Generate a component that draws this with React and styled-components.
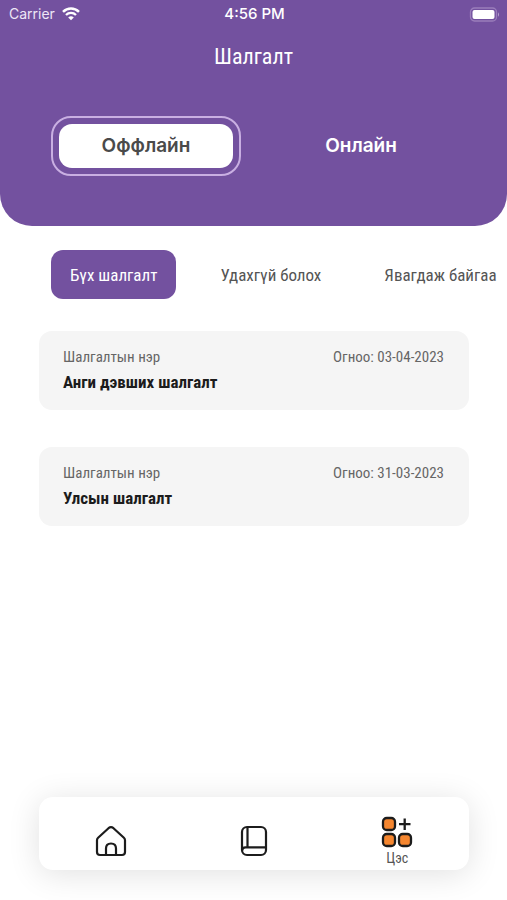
import React, { useState } from "react";
import styled, { createGlobalStyle } from "styled-components";

const purple = "#73519f";
const condensed = '"Roboto Condensed", "Liberation Sans Narrow", Roboto, sans-serif';

const GlobalStyle = createGlobalStyle`
  * { box-sizing: border-box; }
  body { margin: 0; background: #fff; font-family: ${condensed}; }
  button { border: 0; padding: 0; background: none; font: inherit; cursor: pointer; }
`;

const Page = styled.div`
  min-height: 100vh;
  display: flex;
  flex-direction: column;
  overflow-x: hidden;
`;

const Header = styled.header`
  background: ${purple};
  color: #fff;
  border-radius: 0 0 32px 32px;
  padding-bottom: 50px;
`;

const StatusBar = styled.div`
  display: grid;
  grid-template-columns: 1fr auto 1fr;
  align-items: center;
  height: 28px;
  padding: 0 7px 0 9px;
  font: 500 14px/20px Inter, sans-serif;
`;

const Carrier = styled.span`
  display: flex;
  align-items: center;
  gap: 7px;
  font-weight: 400;
  color: #eee6f6;
`;

const Clock = styled.time`
  font-size: 15px;
  font-weight: 500;
`;

const Battery = styled.svg`
  justify-self: end;
`;

const Title = styled.h1`
  margin: 13px 0 43px;
  text-align: center;
  font-size: 22px;
  font-weight: 400;
  line-height: 32px;
`;

const ModeSwitch = styled.div`
  display: grid;
  grid-template-columns: 1fr 1fr;
  column-gap: 25px;
  padding: 0 51px;
`;

const ModeButton = styled.button`
  height: 60px;
  padding: 6px;
  border: 2px solid ${(p) => (p.$active ? "#c9afe2" : "transparent")};
  border-radius: 20px;
  color: ${(p) => (p.$active ? "#4a4a4a" : "#fff")};
`;

const ModeLabel = styled.span`
  display: block;
  border-radius: 13px;
  background: ${(p) => (p.$active ? "#fff" : "transparent")};
  font: 600 19px/44px Inter, sans-serif;
`;

const Filters = styled.nav`
  display: flex;
  gap: 25px;
  margin-top: 24px;
  padding-left: 51px;
  overflow-x: auto;
  scrollbar-width: none;
`;

const FilterButton = styled.button`
  flex: none;
  height: 49px;
  padding: 0 19px;
  border-radius: 12px;
  background: ${(p) => (p.$active ? purple : "transparent")};
  color: ${(p) => (p.$active ? "#fff" : "#555")};
  font-size: 17px;
  white-space: nowrap;
`;

const ExamList = styled.main`
  display: grid;
  gap: 37px;
  margin: 32px 38px 32px 39px;
`;

const ExamCard = styled.article`
  padding: 15px 25px 16px 24px;
  border-radius: 13px;
  background: #f5f5f5;
`;

const CardMeta = styled.div`
  display: flex;
  justify-content: space-between;
  color: #666;
  font-size: 15px;
  line-height: 22px;
`;

const ExamName = styled.h2`
  margin: 2px 0 0;
  color: #1c1c1c;
  font-size: 17px;
  font-weight: 700;
  line-height: 24px;
`;

const BottomBar = styled.nav`
  display: grid;
  grid-template-columns: repeat(3, 1fr);
  height: 73px;
  margin: auto 38px 30px 39px;
  border-radius: 14px;
  background: #fff;
  box-shadow: 0 4px 32px rgba(0, 0, 0, 0.12);
`;

const BottomItem = styled.button`
  display: flex;
  flex-direction: column;
  align-items: center;
  padding-top: ${(p) => (p.$labelled ? "19px" : "28px")};
  color: #1c1c1c;
  font-size: 14px;
  line-height: 20px;

  svg { display: block; flex: none; }
  span { color: #555; }
`;

const WifiIcon = () => (
  <svg width="18" height="14" viewBox="0 0 18 14" fill="none" stroke="#fff" aria-hidden="true">
    <path d="M1 4.9C5.6.4 12.4.4 17 4.9" strokeWidth="2.5" />
    <path d="M4 8C6.8 5.2 11.2 5.2 14 8" strokeWidth="2.3" />
    <path d="M9 13.3 6.2 10.5Q9 8.2 11.8 10.5Z" fill="#fff" stroke="none" />
  </svg>
);

const BatteryIcon = () => (
  <Battery width="31" height="15" viewBox="0 0 31 15" aria-label="Battery">
    <rect x="1.5" y="1" width="26" height="13" rx="4" fill="none" stroke="#9a7dbb" strokeWidth="1.3" />
    <rect x="3.5" y="3" width="22" height="9" rx="2" fill="#fff" />
    <path d="M29 5.2q2 2.3 0 4.6Z" fill="#b7a2cf" />
  </Battery>
);

const HomeIcon = () => (
  <svg width="32" height="32" viewBox="0 0 32 32" fill="none" stroke="currentColor" strokeWidth="2.2" strokeLinejoin="round" aria-hidden="true">
    <path d="M2 15.2Q2 13.7 3.1 12.7L13.5 3.2Q16 1.2 18.5 3.2L28.9 12.7Q30 13.7 30 15.2V27Q30 30 27 30H5Q2 30 2 27Z" />
    <path d="M11 30V23.5Q11 18.5 16 18.5T21 23.5V30" />
  </svg>
);

const BookIcon = () => (
  <svg width="28" height="32" viewBox="0 0 28 32" fill="none" stroke="currentColor" strokeWidth="2.2" aria-hidden="true">
    <rect x="2" y="2" width="24" height="28" rx="5" />
    <path d="M7.5 2V22M26 22.3H5.5Q2.3 22.3 2.2 25.5" />
  </svg>
);

const MenuIcon = () => (
  <svg width="32" height="32" viewBox="0 0 32 32" stroke="currentColor" strokeWidth="2.3" aria-hidden="true">
    <g fill="#f5862f">
      <rect x="2" y="2" width="12" height="12" rx="3.8" />
      <rect x="2" y="18" width="12" height="12" rx="3.8" />
      <rect x="18" y="18" width="12" height="12" rx="3.8" />
    </g>
    <path d="M23.7 2.5V14M18 8.2H29.5" fill="none" />
  </svg>
);

const modes = ["Оффлайн", "Онлайн"];
const filters = ["Бүх шалгалт", "Удахгүй болох", "Явагдаж байгаа"];
const exams = [
  { name: "Анги дэвших шалгалт", date: "03-04-2023" },
  { name: "Улсын шалгалт", date: "31-03-2023" },
];

export default function App() {
  const [mode, setMode] = useState(0);
  const [filter, setFilter] = useState(0);

  return (
    <Page>
      <GlobalStyle />
      <Header>
        <StatusBar>
          <Carrier>Carrier <WifiIcon /></Carrier>
          <Clock>4:56 PM</Clock>
          <BatteryIcon />
        </StatusBar>
        <Title>Шалгалт</Title>
        <ModeSwitch>
          {modes.map((label, i) => (
            <ModeButton key={label} $active={mode === i} aria-pressed={mode === i} onClick={() => setMode(i)}>
              <ModeLabel $active={mode === i}>{label}</ModeLabel>
            </ModeButton>
          ))}
        </ModeSwitch>
      </Header>
      <Filters>
        {filters.map((label, i) => (
          <FilterButton key={label} $active={filter === i} aria-pressed={filter === i} onClick={() => setFilter(i)}>
            {label}
          </FilterButton>
        ))}
      </Filters>
      <ExamList>
        {exams.map((exam) => (
          <ExamCard key={exam.name}>
            <CardMeta>
              <span>Шалгалтын нэр</span>
              <span>Огноо: {exam.date}</span>
            </CardMeta>
            <ExamName>{exam.name}</ExamName>
          </ExamCard>
        ))}
      </ExamList>
      <BottomBar>
        <BottomItem aria-label="Нүүр"><HomeIcon /></BottomItem>
        <BottomItem aria-label="Ном"><BookIcon /></BottomItem>
        <BottomItem $labelled><MenuIcon /><span>Цэс</span></BottomItem>
      </BottomBar>
    </Page>
  );
}
